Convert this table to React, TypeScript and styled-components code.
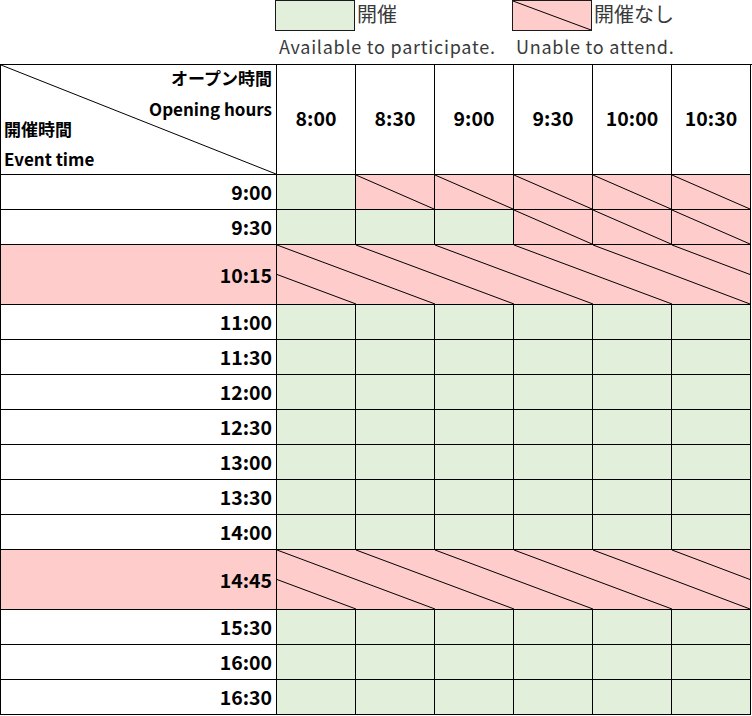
import styled, { createGlobalStyle } from "styled-components"

type Tone = "open" | "closed" | "plain"

const fills: Record<Tone, string> = {
    open: "#e2efda",
    closed: "#ffcccc",
    plain: "#ffffff",
}

const openingTimes = ["8:00", "8:30", "9:00", "9:30", "10:00", "10:30"]

type Row =
    | { label: string; kind: "slots"; slots: boolean[] }
    | { label: string; kind: "band" }

const G = true
const P = false

const rows: Row[] = [
    { label: "9:00", kind: "slots", slots: [G, P, P, P, P, P] },
    { label: "9:30", kind: "slots", slots: [G, G, G, P, P, P] },
    { label: "10:15", kind: "band" },
    { label: "11:00", kind: "slots", slots: [G, G, G, G, G, G] },
    { label: "11:30", kind: "slots", slots: [G, G, G, G, G, G] },
    { label: "12:00", kind: "slots", slots: [G, G, G, G, G, G] },
    { label: "12:30", kind: "slots", slots: [G, G, G, G, G, G] },
    { label: "13:00", kind: "slots", slots: [G, G, G, G, G, G] },
    { label: "13:30", kind: "slots", slots: [G, G, G, G, G, G] },
    { label: "14:00", kind: "slots", slots: [G, G, G, G, G, G] },
    { label: "14:45", kind: "band" },
    { label: "15:30", kind: "slots", slots: [G, G, G, G, G, G] },
    { label: "16:00", kind: "slots", slots: [G, G, G, G, G, G] },
    { label: "16:30", kind: "slots", slots: [G, G, G, G, G, G] },
]

// single corner-to-corner stroke
function Slash() {
    return (
        <SlashSvg viewBox="0 0 100 100" preserveAspectRatio="none">
            <line
                x1="0"
                y1="0"
                x2="100"
                y2="100"
                stroke="#000"
                strokeWidth="1"
                vectorEffect="non-scaling-stroke"
            />
        </SlashSvg>
    )
}

// two half-height strokes, joins up with neighbours into long diagonals
function Hatch() {
    return (
        <SlashSvg viewBox="0 0 100 100" preserveAspectRatio="none">
            <line
                x1="0"
                y1="0"
                x2="100"
                y2="50"
                stroke="#000"
                strokeWidth="1"
                vectorEffect="non-scaling-stroke"
            />
            <line
                x1="0"
                y1="50"
                x2="100"
                y2="100"
                stroke="#000"
                strokeWidth="1"
                vectorEffect="non-scaling-stroke"
            />
        </SlashSvg>
    )
}

function App() {
    return (
        <>
            <GlobalStyle />
            <Page>
                <Legend>
                    <Swatch $tone="open" $col={2} />
                    <LegendName $col={3}>開催</LegendName>
                    <Swatch $tone="closed" $col={5}>
                        <Slash />
                    </Swatch>
                    <LegendName $col={6}>開催なし</LegendName>
                    <LegendNote $col={2}>Available to participate.</LegendNote>
                    <LegendNote $col={5}>Unable to attend.</LegendNote>
                </Legend>

                <Sheet>
                    <CornerCell>
                        <Slash />
                        <CornerTop>
                            <span>オープン時間</span>
                            <span>Opening hours</span>
                        </CornerTop>
                        <CornerBottom>
                            <span>開催時間</span>
                            <span>Event time</span>
                        </CornerBottom>
                    </CornerCell>
                    {openingTimes.map((t) => (
                        <HeadCell key={t}>{t}</HeadCell>
                    ))}

                    {rows.map((row) =>
                        row.kind === "band" ? (
                            <BandRow key={row.label}>
                                <LabelCell $tone="closed" $tall>
                                    {row.label}
                                </LabelCell>
                                {openingTimes.map((t, i) => (
                                    <BandCell
                                        key={t}
                                        $last={i === openingTimes.length - 1}
                                    >
                                        <Hatch />
                                    </BandCell>
                                ))}
                            </BandRow>
                        ) : (
                            <SlotRow key={row.label}>
                                <LabelCell $tone="plain">{row.label}</LabelCell>
                                {row.slots.map((ok, i) => (
                                    <SlotCell
                                        key={i}
                                        $tone={ok ? "open" : "closed"}
                                    >
                                        {!ok && <Slash />}
                                    </SlotCell>
                                ))}
                            </SlotRow>
                        )
                    )}
                </Sheet>
            </Page>
        </>
    )
}

export default App

const GlobalStyle = createGlobalStyle`
    html, body {
        margin: 0;
        padding: 0;
        background: #ffffff;
    }
    body {
        font-family: "Noto Sans CJK JP", "Noto Sans", sans-serif;
        color: #000;
    }
`

const columns = "276px repeat(6, 79px)"

const Page = styled.div`
    width: 752px;
    height: 716px;
    overflow: hidden;
`

const Legend = styled.div`
    display: grid;
    grid-template-columns: ${columns};
    grid-template-rows: 31px 33px;
    padding-left: 1px;
    align-items: start;
`

const Swatch = styled.div<{ $tone: Tone; $col: number }>`
    position: relative;
    grid-column: ${(p) => p.$col};
    grid-row: 1;
    box-sizing: border-box;
    width: 80px;
    height: 31px;
    margin-left: -2px;
    border: 1px solid #1a1a1a;
    background: ${(p) => fills[p.$tone]};
`

const LegendName = styled.div<{ $col: number }>`
    grid-column: ${(p) => p.$col} / span 2;
    grid-row: 1;
    padding-left: 1px;
    font-size: 20px;
    line-height: 28px;
    color: #3a3a3a;
    white-space: nowrap;
`

const LegendNote = styled.div<{ $col: number }>`
    grid-column: ${(p) => p.$col} / span 3;
    grid-row: 2;
    padding-left: 2px;
    font-size: 18px;
    letter-spacing: 0.75px;
    line-height: 30px;
    color: #3a3a3a;
    white-space: nowrap;
`

const Sheet = styled.div`
    display: grid;
    grid-template-columns: ${columns};
    border-top: 1px solid #000;
    border-left: 1px solid #000;
    font-weight: 700;
`

const SlashSvg = styled.svg`
    position: absolute;
    inset: 0;
    width: 100%;
    height: 100%;
    pointer-events: none;
`

const CornerCell = styled.div`
    position: relative;
    height: 110px;
    box-sizing: border-box;
    border-right: 1px solid #000;
    border-bottom: 1px solid #000;
    display: flex;
    flex-direction: column;
    justify-content: space-between;
    font-size: 17px;
`

const CornerTop = styled.div`
    display: flex;
    flex-direction: column;
    align-items: flex-end;
    padding-right: 4px;
    margin-top: -3px;
    margin-bottom: -14px;
    line-height: 31px;
`

const CornerBottom = styled.div`
    display: flex;
    flex-direction: column;
    align-items: flex-start;
    padding-left: 3px;
    line-height: 30px;
`

const HeadCell = styled.div`
    height: 110px;
    box-sizing: border-box;
    border-right: 1px solid #000;
    border-bottom: 1px solid #000;
    display: flex;
    align-items: center;
    justify-content: center;
    font-size: 19.5px;
    padding-bottom: 5px;
`

const SlotRow = styled.div`
    display: contents;
`

const BandRow = styled.div`
    display: contents;
`

const LabelCell = styled.div<{ $tone: Tone; $tall?: boolean }>`
    height: ${(p) => (p.$tall ? "60px" : "35px")};
    box-sizing: border-box;
    border-right: 1px solid #000;
    border-bottom: 1px solid #000;
    background: ${(p) => fills[p.$tone]};
    display: flex;
    align-items: center;
    justify-content: flex-end;
    padding: 0 4px 1px 0;
    font-size: 19.5px;
`

const SlotCell = styled.div<{ $tone: Tone }>`
    position: relative;
    height: 35px;
    box-sizing: border-box;
    border-right: 1px solid #000;
    border-bottom: 1px solid #000;
    background: ${(p) => fills[p.$tone]};
`

const BandCell = styled.div<{ $last: boolean }>`
    position: relative;
    height: 60px;
    box-sizing: border-box;
    border-right: ${(p) => (p.$last ? "1px solid #000" : "none")};
    border-bottom: 1px solid #000;
    background: ${fills.closed};
`
